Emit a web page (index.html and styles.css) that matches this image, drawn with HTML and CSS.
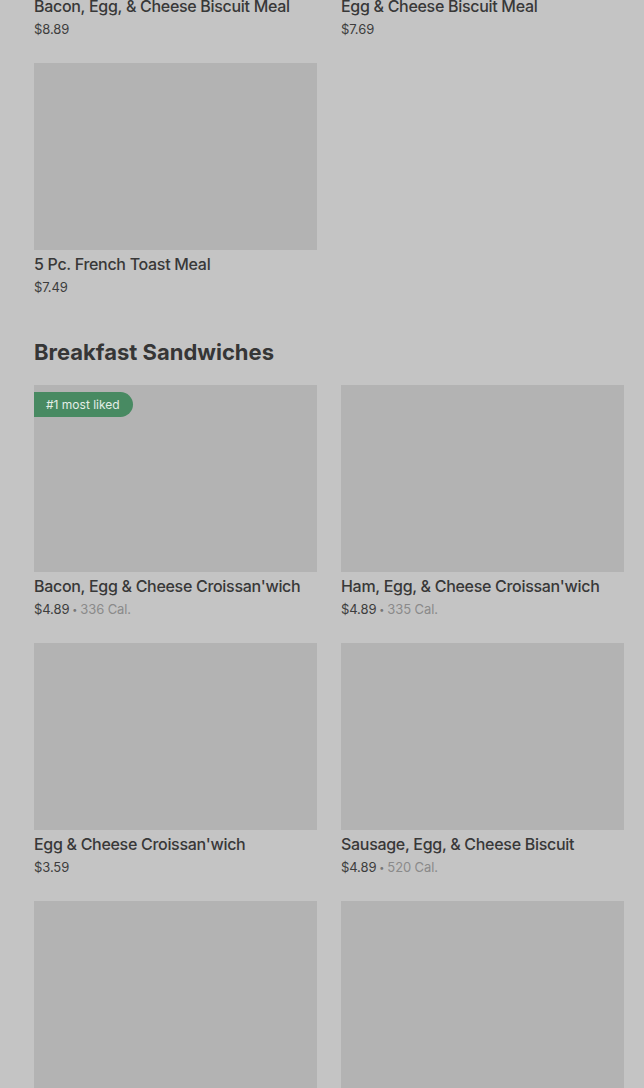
FILE: index.html
```html
<!DOCTYPE html>
<html lang="en">
<head>
    <meta charset="UTF-8">
    <meta name="viewport" content="width=device-width, initial-scale=1.0">
    <title>Breakfast Menu</title>
    <link rel="stylesheet" href="styles.css">
</head>
<body>
    <div class="page">
        <section class="menu-section">
            <div class="item-grid">
                <div class="item">
                    <div class="item-image"></div>
                    <div class="item-name">Bacon, Egg, &amp; Cheese Biscuit Meal</div>
                    <div class="item-meta"><span class="price">$8.89</span></div>
                </div>
                <div class="item">
                    <div class="item-image"></div>
                    <div class="item-name">Egg &amp; Cheese Biscuit Meal</div>
                    <div class="item-meta"><span class="price">$7.69</span></div>
                </div>
                <div class="item">
                    <div class="item-image"></div>
                    <div class="item-name">5 Pc. French Toast Meal</div>
                    <div class="item-meta"><span class="price">$7.49</span></div>
                </div>
            </div>
        </section>

        <section class="menu-section">
            <h2 class="section-title">Breakfast Sandwiches</h2>
            <div class="item-grid">
                <div class="item">
                    <div class="item-image">
                        <span class="badge">#1 most liked</span>
                    </div>
                    <div class="item-name">Bacon, Egg &amp; Cheese Croissan'wich</div>
                    <div class="item-meta"><span class="price">$4.89</span><span class="dot">•</span><span class="cal">336 Cal.</span></div>
                </div>
                <div class="item">
                    <div class="item-image"></div>
                    <div class="item-name">Ham, Egg, &amp; Cheese Croissan'wich</div>
                    <div class="item-meta"><span class="price">$4.89</span><span class="dot">•</span><span class="cal">335 Cal.</span></div>
                </div>
                <div class="item">
                    <div class="item-image"></div>
                    <div class="item-name">Egg &amp; Cheese Croissan'wich</div>
                    <div class="item-meta"><span class="price">$3.59</span></div>
                </div>
                <div class="item">
                    <div class="item-image"></div>
                    <div class="item-name">Sausage, Egg, &amp; Cheese Biscuit</div>
                    <div class="item-meta"><span class="price">$4.89</span><span class="dot">•</span><span class="cal">520 Cal.</span></div>
                </div>
                <div class="item">
                    <div class="item-image"></div>
                    <div class="item-name">Sausage, Egg &amp; Cheese Croissan'wich</div>
                    <div class="item-meta"><span class="price">$4.89</span></div>
                </div>
                <div class="item">
                    <div class="item-image"></div>
                    <div class="item-name">Ham &amp; Cheese Croissan'wich</div>
                    <div class="item-meta"><span class="price">$3.99</span></div>
                </div>
            </div>
        </section>
    </div>
</body>
</html>
```

FILE: styles.css
```css
html, body {
    margin: 0;
    padding: 0;
    background-color: #c4c4c4;
    overflow: hidden;
}

body {
    font-family: Inter, 'Noto Sans', sans-serif;
    color: #333;
}

/* page is scrolled: first row's pictures are above the fold */
.page {
    margin-top: -195px;
    padding: 0 20px 0 34px;
}

.menu-section {
    padding-bottom: 42px;
}

.section-title {
    margin: 0 0 19px;
    font-size: 22px;
    line-height: 28px;
    font-weight: 700;
    color: #363636;
}

.item-grid {
    display: grid;
    grid-template-columns: minmax(0, 1fr) minmax(0, 1fr);
    column-gap: 24px;
    row-gap: 25px;
}

.item {
    min-width: 0;
}

.item-image {
    position: relative;
    height: 187px;
    background-color: #b3b3b3;
}

.badge {
    position: absolute;
    top: 7px;
    left: 0;
    height: 25px;
    line-height: 25px;
    padding: 0 13px 0 12px;
    border-radius: 0 13px 13px 0;
    background-color: #488a62;
    color: #e4eee7;
    font-size: 12px;
}

.item-name {
    margin-top: 4px;
    font-size: 16px;
    line-height: 20px;
    font-weight: 500;
    letter-spacing: -0.3px;
    color: #383838;
    white-space: nowrap;
}

.item-meta {
    display: flex;
    align-items: center;
    height: 18px;
    margin-top: 4px;
    font-size: 13px;
    letter-spacing: -0.1px;
}

.price {
    color: #3d3d3d;
}

.dot {
    margin: 0 3px;
    font-size: 9px;
    color: #777;
}

.cal {
    color: #8a8a8a;
}
```
